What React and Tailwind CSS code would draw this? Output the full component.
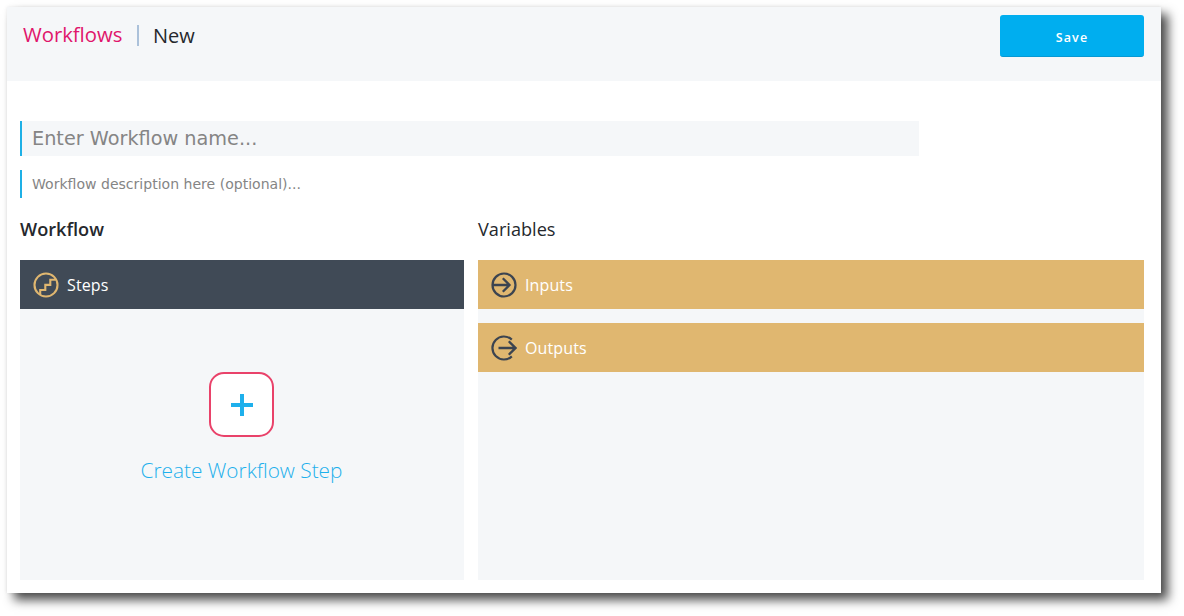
function StepsIcon() {
  return (
    <svg className="size-[26px] shrink-0" viewBox="0 0 26 26" fill="none" stroke="#e0b770" strokeWidth="2.1">
      <circle cx="13" cy="13" r="11.5" />
      <path d="M7.2 22.5V18H12.3V12.9H17.3V7.8H22.8" />
    </svg>
  );
}

function InputIcon() {
  return (
    <svg className="size-[26px] shrink-0" viewBox="0 0 26 26" fill="none" stroke="#3c4450" strokeWidth="2.2">
      <circle cx="13" cy="13" r="11.5" />
      <path d="M1.5 13H18.2M11.8 6.3L18.5 13L11.8 19.7" strokeWidth="2.3" />
    </svg>
  );
}

function OutputIcon() {
  return (
    <svg className="size-[26px] shrink-0" viewBox="0 0 26 26" fill="none" stroke="#3c4450" strokeWidth="2.2">
      <path d="M20.8 4.6A11.5 11.5 0 1 0 20.8 21.4" />
      <path d="M7.5 13H24.2M17.8 6.3L24.5 13L17.8 19.7" strokeWidth="2.3" />
    </svg>
  );
}

function VariableBar({ icon, label }) {
  return (
    <div className="flex h-[49px] items-center gap-2 bg-[#e0b770] pl-[13px] text-base tracking-[0.12px] text-white">
      {icon}
      <span>{label}</span>
    </div>
  );
}

export default function App() {
  return (
    <div className="h-[616px] w-[1184px] overflow-hidden bg-white pt-[7px] pl-[7px] font-['Open_Sans',sans-serif] text-[#25282d]">
      <div className="h-[586px] w-[1154px] bg-white shadow-[0_0_3px_rgba(0,0,0,0.08),7px_7px_10px_rgba(0,0,0,0.7)]">
        <header className="flex h-[74px] items-start justify-between bg-[#f5f7f9] pt-2 pr-[17px] pl-4">
          <div className="flex h-[42px] items-center text-xl">
            <a className="-mt-1 w-[100px] text-[20.3px] text-[#e0156b]">Workflows</a>
            <span className="-mt-0.5 ml-[14px] h-[21px] w-0.5 bg-[#abc1da]" />
            <span className="ml-[14px]">New</span>
          </div>
          <button className="h-[42px] w-36 rounded-[3px] border-b border-[#0799d3] bg-[#00aeef] pt-[5px] text-[12.5px] font-semibold tracking-[1.1px] text-white">
            Save
          </button>
        </header>
        <main className="pt-10 pr-[17px] pl-[13px]">
          <input
            className="block h-[35px] w-[899px] border-l-2 border-[#1eb0e6] bg-[#f5f7f9] pl-2.5 font-['DejaVu_Sans',sans-serif] text-[19.25px] placeholder:text-[#858585]"
            placeholder="Enter Workflow name..."
          />
          <input
            className="mt-[14px] block h-7 w-[899px] border-l-2 border-[#1eb0e6] pl-2.5 font-['DejaVu_Sans',sans-serif] text-[14.06px] placeholder:text-[#858585]"
            placeholder="Workflow description here (optional)..."
          />
          <div className="mt-[18px] grid grid-cols-[444px_666px] gap-x-[14px]">
            <h2 className="h-[44px] text-[18.15px] leading-[27px] font-semibold">Workflow</h2>
            <h2 className="h-[44px] text-[18.15px] leading-[27px]">Variables</h2>
            <section className="h-80 bg-[#f5f7f9]">
              <div className="flex h-[49px] items-center gap-2 bg-[#404a56] pl-[13px] text-base tracking-[0.12px] text-white">
                <StepsIcon />
                <span>Steps</span>
              </div>
              <div className="flex flex-col items-center pt-[63px] pr-[1px]">
                <button className="flex size-[65px] items-center justify-center rounded-[15px] border-2 border-[#e9426a] bg-white">
                  <svg className="size-[22px]" viewBox="0 0 22 22" stroke="#1eb0ec" strokeWidth="4">
                    <path d="M11 0V22M0 11H22" />
                  </svg>
                </button>
                <span className="mt-[18px] text-[20.8px] leading-[30px] font-light text-[#1eb0ec]">Create Workflow Step</span>
              </div>
            </section>
            <section className="flex h-80 flex-col gap-[14px] bg-[#f5f7f9]">
              <VariableBar icon={<InputIcon />} label="Inputs" />
              <VariableBar icon={<OutputIcon />} label="Outputs" />
            </section>
          </div>
        </main>
      </div>
    </div>
  );
}
